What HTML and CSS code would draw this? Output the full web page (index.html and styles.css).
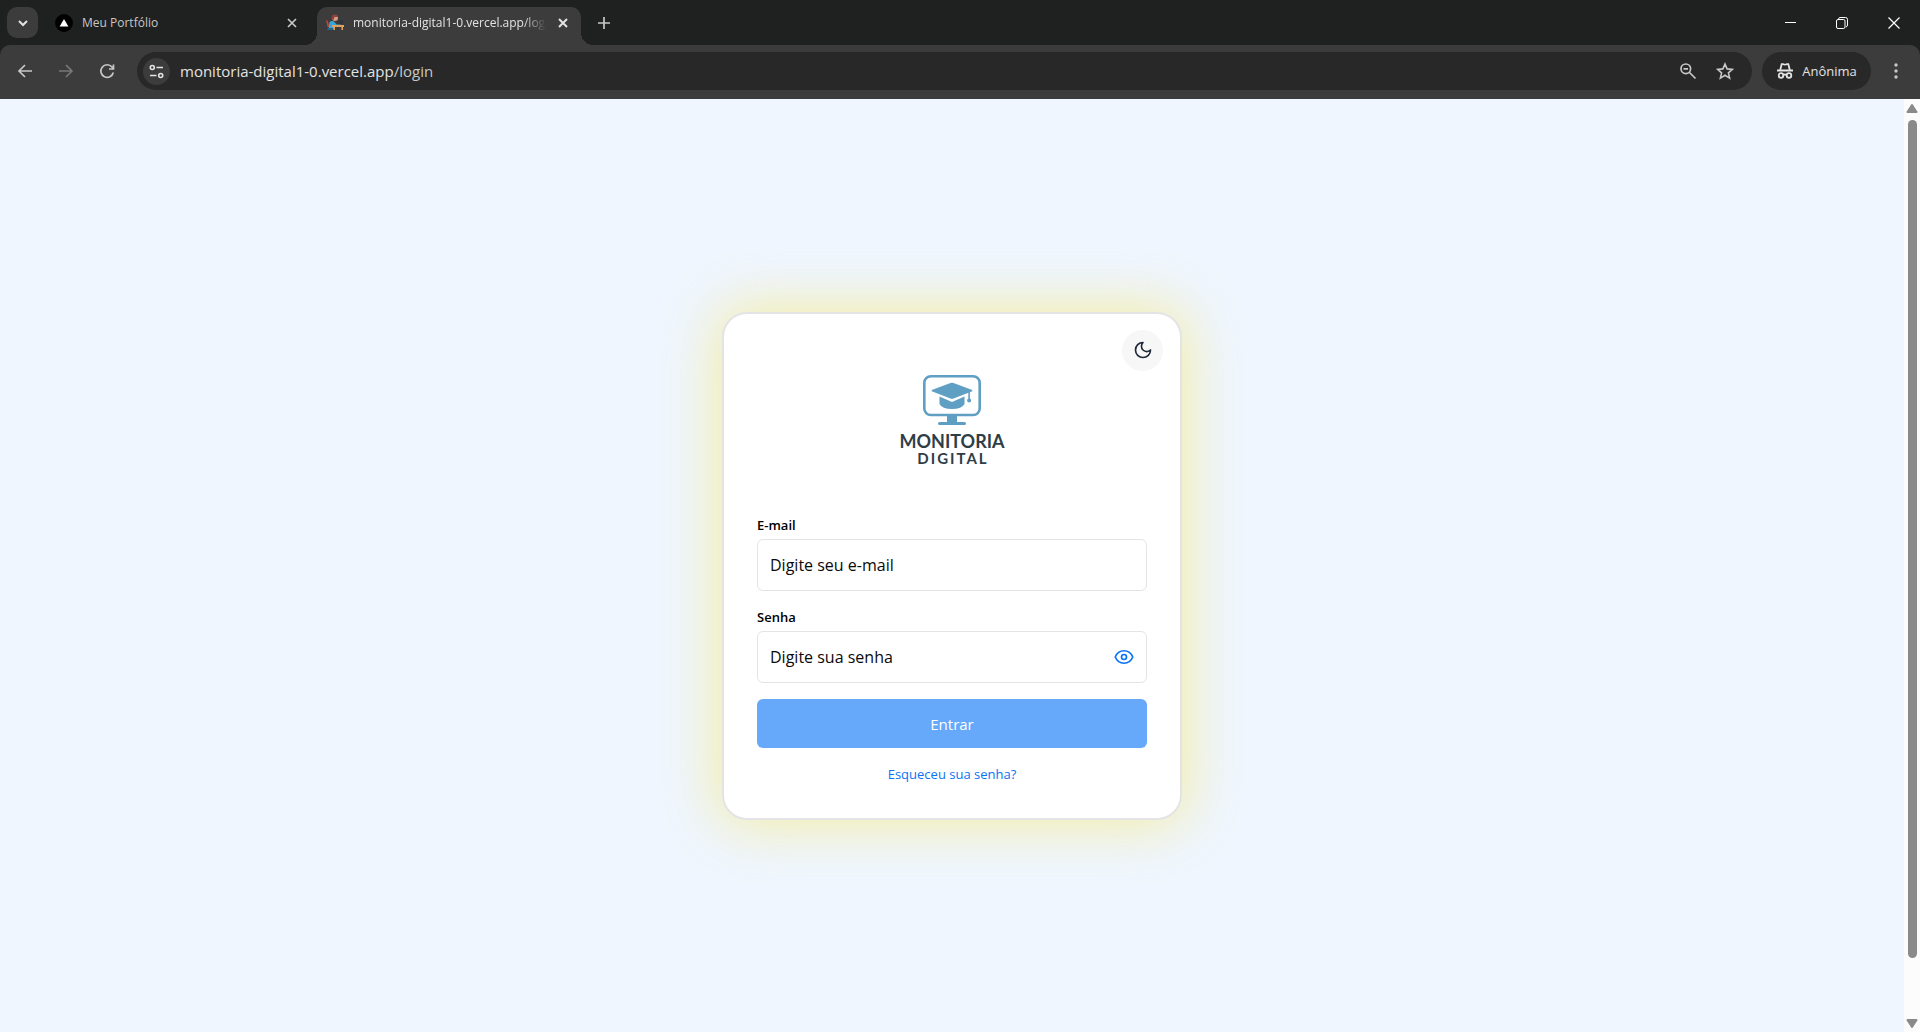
FILE: index.html
```html
<!DOCTYPE html>
<html lang="pt-BR">
<head>
<meta charset="utf-8">
<title>Monitoria Digital</title>
<link rel="stylesheet" href="styles.css">
</head>
<body>
<header class="browser">
  <div class="tab-strip">
    <button class="tab-search" aria-label="Pesquisar guias"><svg width="12" height="12" viewBox="0 0 12 12"><path d="M2 4l4 4 4-4" fill="none" stroke="currentColor" stroke-width="2"/></svg></button>
    <div class="tab">
      <svg class="favicon" width="18" height="18" viewBox="0 0 18 18"><circle cx="9" cy="9" r="9" fill="#000"/><path d="M9 5l4.400 7.600H4.600z" fill="#fff"/></svg>
      <span class="tab-title">Meu Portfólio</span>
      <button class="icon-btn" aria-label="Fechar guia"><svg width="16" height="16" viewBox="0 0 16 16"><path d="M4 4l8 8M12 4l-8 8" stroke="currentColor" stroke-width="1.700"/></svg></button>
    </div>
    <div class="tab tab-active">
      <svg class="favicon" width="18" height="18" viewBox="0 0 18 18"><path d="M0 6q2 0 2.500 3.500L3.500 13H1.500z" fill="#c8403c"/><path d="M3.500 8q3-2 5 0l2 2.500h4v1.800H9L8 15H2.500z" fill="#35a6d8"/><circle cx="9" cy="4" r="3" fill="#d99a80"/><path d="M5.500 5Q5.500 0 9 .5q3 0 3 2.500H8.500L7.500 6z" fill="#8d4141"/><path d="M13 10l1-4h3.500l-1 4z" fill="#30353d"/><path d="M6 11h12v2h-1v3h-1.500v-3H9v3H7.500v-3H6z" fill="#e3a15d"/><path d="M2 14h5v2H1z" fill="#26648b"/></svg>
      <span class="tab-title">monitoria-digital1-0.vercel.app/login</span>
      <button class="icon-btn" aria-label="Fechar guia"><svg width="16" height="16" viewBox="0 0 16 16"><path d="M4 4l8 8M12 4l-8 8" stroke="currentColor" stroke-width="2"/></svg></button>
    </div>
    <button class="icon-btn new-tab" aria-label="Nova guia"><svg width="16" height="16" viewBox="0 0 16 16"><path d="M8 2v12M2 8h12" stroke="currentColor" stroke-width="1.700"/></svg></button>
    <div class="window-controls">
      <button aria-label="Minimizar"><svg width="12" height="12" viewBox="0 0 12 12"><path d="M1 5.500h11" stroke="currentColor"/></svg></button>
      <button aria-label="Restaurar"><svg width="12" height="12" viewBox="0 0 12 12"><g fill="none" stroke="currentColor"><rect x=".5" y="2.500" width="8.500" height="9" rx="1.500"/><path d="M2.500 2.500V2Q3 .5 4 .5h5.500q2 0 2 2v5.500q0 1.500-1.500 2"/></g></svg></button>
      <button aria-label="Fechar"><svg width="12" height="12" viewBox="0 0 12 12"><path d="M.5 .5l11 11M11.500 .5l-11 11" stroke="currentColor" stroke-width="1.200"/></svg></button>
    </div>
  </div>
  <div class="toolbar">
    <button class="icon-btn" aria-label="Voltar"><svg width="20" height="20" viewBox="0 0 20 20"><path d="M17 10H4M10 4l-6 6 6 6" fill="none" stroke="currentColor" stroke-width="1.700"/></svg></button>
    <button class="icon-btn" aria-label="Avançar" disabled><svg width="20" height="20" viewBox="0 0 20 20"><path d="M3 10h13M10 4l6 6-6 6" fill="none" stroke="currentColor" stroke-width="1.700"/></svg></button>
    <button class="icon-btn" aria-label="Recarregar"><svg width="20" height="20" viewBox="0 0 20 20"><path d="M16.300 11.500A6.300 6.300 0 1 1 15 6l1.500 2M16.500 3.500V8H12" fill="none" stroke="currentColor" stroke-width="1.700"/></svg></button>
    <div class="address">
      <button class="site-info" aria-label="Informações do site"><svg width="15" height="15" viewBox="0 0 15 15"><g fill="none" stroke="currentColor" stroke-width="1.600"><circle cx="3.300" cy="3.500" r="2"/><path d="M7.500 3.500H14M1 11.500h6.500"/><circle cx="11.700" cy="11.500" r="2"/></g></svg></button>
      <span class="url">monitoria-digital1-0.vercel.app<span class="url-path">/login</span></span>
      <button class="icon-btn" aria-label="Zoom"><svg width="18" height="18" viewBox="0 0 18 18"><g fill="none" stroke="currentColor" stroke-width="1.700"><circle cx="6.800" cy="6.800" r="4.800"/><path d="M10.500 10.500l6 6M4.500 6.800H9"/></g></svg></button>
      <button class="icon-btn" aria-label="Favoritar"><svg width="18" height="18" viewBox="0 0 18 18"><path d="M9 2l2.100 4.900 5.300.5-4 3.500 1.200 5.200L9 13.300l-4.600 2.800 1.200-5.200-4-3.500 5.300-.5z" fill="none" stroke="currentColor" stroke-width="1.600"/></svg></button>
    </div>
    <button class="incognito"><svg width="18" height="18" viewBox="0 0 18 18"><g fill="none" stroke="currentColor" stroke-width="1.800"><path d="M1 8.500h16M4.200 8l1.500-5.800h1.600q1.700.8 3.400 0h1.600L13.800 8"/><circle cx="5" cy="13.500" r="2.300"/><circle cx="13" cy="13.500" r="2.300"/><path d="M7 13q2-1 4 0"/></g></svg>Anônima</button>
    <button class="icon-btn" aria-label="Mais opções"><svg width="16" height="18" viewBox="0 0 16 18"><g fill="currentColor"><circle cx="8" cy="3" r="1.700"/><circle cx="8" cy="9" r="1.700"/><circle cx="8" cy="15" r="1.700"/></g></svg></button>
  </div>
</header>
<div class="viewport">
  <main class="page">
    <form class="card">
      <button type="button" class="theme" aria-label="Alternar tema"><svg width="20" height="20" viewBox="0 0 24 24"><path d="M12 3a6 6 0 0 0 9 9 9 9 0 1 1-9-9z" fill="none" stroke="currentColor" stroke-width="2" stroke-linecap="round" stroke-linejoin="round"/></svg></button>
      <div class="logo">
        <svg width="58" height="50" viewBox="0 0 58 50"><rect x="1.300" y="1.300" width="55.400" height="38.700" rx="6.500" fill="none" stroke="#5f9fc4" stroke-width="2.600"/><g fill="#5f9fc4"><path d="M24 40h10v7h7.500q1.500 0 1.500 1.500T41.500 50h-25Q15 50 15 48.500T16.500 47H24z"/><path d="M8.700 15L27.500 8Q29 7.500 30.500 8L49.300 15v1.200L30.500 23.500q-1.500.8-3 0L8.700 16.200z"/><path d="M16.500 21.500L29 27l12.500-5.500V29Q39 34 29 34T16.500 29z"/><path d="M45.300 16h1.600v8h-1.600z"/><circle cx="46.100" cy="25.500" r="2"/></g></svg>
        <span class="logo-name">MONITORIA</span>
        <span class="logo-sub">DIGITAL</span>
      </div>
      <div class="field">
        <label for="email">E-mail</label>
        <div class="control"><input id="email" type="email" placeholder="Digite seu e-mail"></div>
      </div>
      <div class="field">
        <label for="senha">Senha</label>
        <div class="control"><input id="senha" type="password" placeholder="Digite sua senha"><button type="button" class="reveal" aria-label="Mostrar senha"><svg width="20" height="20" viewBox="0 0 24 24"><g fill="none" stroke="currentColor" stroke-width="2"><path d="M1.500 12C3.500 7 7.500 4.500 12 4.500S20.500 7 22.500 12C20.500 17 16.500 19.500 12 19.500S3.500 17 1.500 12z"/><circle cx="12" cy="12" r="3"/></g></svg></button></div>
      </div>
      <button type="submit" class="submit">Entrar</button>
      <a class="forgot" href="#">Esqueceu sua senha?</a>
    </form>
  </main>
  <div class="scrollbar">
    <svg width="12" height="10" viewBox="0 0 12 10"><path d="M6 1l4.500 7h-9z" fill="#8a8a8a" stroke="#8a8a8a" stroke-linejoin="round" stroke-width="2"/></svg>
    <div class="track"><div class="thumb"></div></div>
    <svg width="12" height="10" viewBox="0 0 12 10"><path d="M6 9l4.500-7h-9z" fill="#8a8a8a" stroke="#8a8a8a" stroke-linejoin="round" stroke-width="2"/></svg>
  </div>
</div>
</body>
</html>
```
FILE: styles.css
```css
* { box-sizing: border-box; }

body {
  margin: 0;
  min-height: 100vh;
  display: flex;
  flex-direction: column;
  font-family: "Open Sans", "Noto Sans", sans-serif;
  background: #eff6ff;
}

button {
  display: flex;
  align-items: center;
  justify-content: center;
  padding: 0;
  border: 0;
  background: none;
  color: inherit;
  font: inherit;
}

svg { display: block; flex: none; }

/* Browser window */
.browser {
  background: #1f2120;
  color: #c7c7c7;
}

.tab-strip {
  display: flex;
  align-items: center;
  height: 45px;
  padding-left: 7px;
}

.tab-search {
  width: 31px;
  height: 31px;
  margin-right: 8px;
  border-radius: 10px;
  background: #3c3c3c;
  color: #e3e3e3;
}

.tab {
  position: relative;
  display: flex;
  align-items: center;
  gap: 9px;
  width: 264px;
  height: 31px;
  margin-right: 7px;
  padding: 0 10px 0 9px;
  font-size: 12px;
}

.tab-title {
  flex: 1;
  overflow: hidden;
  white-space: nowrap;
}

.tab-active {
  align-self: flex-end;
  height: 38px;
  padding-bottom: 7px;
  border-radius: 10px 10px 0 0;
  background: #3c3c3c;
  color: #e3e3e3;
}

.tab-active .tab-title {
  mask-image: linear-gradient(to right, #000 88%, transparent);
}

.tab-active::before,
.tab-active::after {
  content: "";
  position: absolute;
  bottom: 0;
  width: 12px;
  height: 12px;
}

.tab-active::before {
  right: 100%;
  background: radial-gradient(circle at 0 0, transparent 12px, #3c3c3c 12px);
}

.tab-active::after {
  left: 100%;
  background: radial-gradient(circle at 100% 0, transparent 12px, #3c3c3c 12px);
}

.new-tab { margin-left: 8px; }

.window-controls {
  display: flex;
  height: 45px;
  margin-left: auto;
  color: #fff;
}

.window-controls button { width: 52px; }

.toolbar {
  display: flex;
  align-items: center;
  gap: 21px;
  height: 54px;
  padding: 0 16px 2px 15px;
  border-radius: 10px 10px 0 0;
  background: #3c3c3c;
}

.icon-btn:disabled { color: #777; }

.address {
  flex: 1;
  display: flex;
  align-items: center;
  gap: 19px;
  height: 38px;
  margin: 0 -11px 0 -1px;
  padding: 0 18px 0 6px;
  border-radius: 19px;
  background: #282828;
}

.site-info {
  width: 27px;
  height: 27px;
  margin-right: -9px;
  border-radius: 50%;
  background: #3c3c3c;
  color: #e3e3e3;
}

.url {
  flex: 1;
  color: #e3e3e3;
  font-size: 15px;
}

.url-path { color: #c7c7c7; }

.incognito {
  gap: 8px;
  width: 109px;
  height: 38px;
  margin-right: -4px;
  border-radius: 19px;
  background: #282828;
  color: #e3e3e3;
  font-size: 13px;
}

/* Page */
.viewport {
  flex: 1;
  display: flex;
}

.page {
  flex: 1;
  display: flex;
  align-items: center;
  justify-content: center;
}

.card {
  position: relative;
  display: flex;
  flex-direction: column;
  gap: 16px;
  width: 460px;
  padding: 33px;
  border: 2px solid #e4e4e7;
  border-radius: 25px;
  background: #fff;
  box-shadow: 0 0 55px 5px rgba(250, 225, 50, 0.44);
}

.theme {
  position: absolute;
  top: 16px;
  right: 17px;
  width: 41px;
  height: 41px;
  border-radius: 50%;
  background: #f7f7f7;
  color: #1e293b;
}

.logo {
  display: flex;
  flex-direction: column;
  align-items: center;
  height: 152px;
  padding-top: 28px;
  color: #2f3d47;
  font-family: Lato, sans-serif;
  font-weight: 700;
}

.logo-name {
  margin-top: 6px;
  font-size: 18px;
  line-height: 20px;
}

.logo-sub {
  padding-left: 2px;
  font-size: 15px;
  line-height: 14px;
  letter-spacing: 2px;
}

.field {
  display: flex;
  flex-direction: column;
  gap: 4px;
}

.field label {
  font-size: 13px;
  font-weight: 600;
  line-height: 20px;
}

.control {
  display: flex;
  align-items: center;
  height: 52px;
  padding: 0 12px;
  border: 1px solid #e4e4e7;
  border-radius: 6px;
}

.control input {
  flex: 1;
  min-width: 0;
  padding: 0;
  border: 0;
  outline: 0;
  background: none;
  font: inherit;
  font-size: 16px;
}

.control input::placeholder { color: #0a0a0a; }

.reveal { color: #0a73f5; }

.submit {
  height: 49px;
  padding-top: 2px;
  border-radius: 6px;
  background: #66a8fa;
  color: #fff;
  font-size: 15px;
}

.forgot {
  align-self: center;
  color: #0a73f5;
  font-size: 13px;
  line-height: 21px;
  text-decoration: none;
}

.scrollbar {
  display: flex;
  flex-direction: column;
  align-items: center;
  gap: 6px;
  width: 16px;
  padding: 5px 0 4px;
  background: #fcfcfc;
}

.track {
  flex: 1;
  display: flex;
  flex-direction: column;
}

.thumb {
  width: 9px;
  height: 94%;
  border-radius: 5px;
  background: #8a8a8a;
}
```
